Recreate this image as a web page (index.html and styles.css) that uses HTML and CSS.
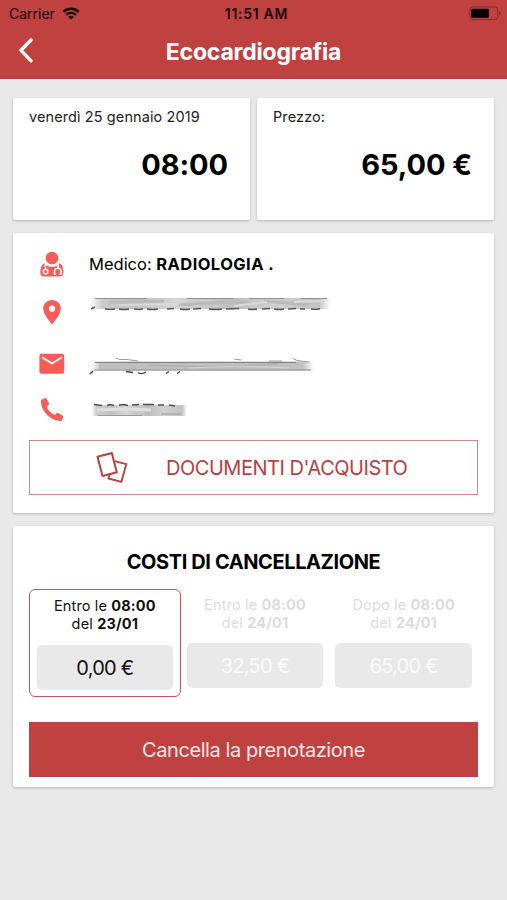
FILE: index.html
```html
<!DOCTYPE html>
<html lang="it">
<head>
  <meta charset="utf-8">
  <title>Ecocardiografia</title>
  <link rel="stylesheet" href="styles.css">
</head>
<body>
  <header class="header">
    <div class="status-bar">
      <div class="carrier">
        <span>Carrier</span>
        <svg class="wifi" width="18" height="14" viewBox="0 0 18 14">
          <path d="M1.400 4.800C5.600 .8 12.400 .8 16.600 4.800" fill="none" stroke="#180505" stroke-width="2.500"/>
          <path d="M4.200 7.800C7 5.200 11 5.200 13.800 7.800" fill="none" stroke="#180505" stroke-width="2.300"/>
          <path d="M9 12.500L6.200 9.900C7.800 8.500 10.200 8.500 11.800 9.900Z" fill="#180505"/>
        </svg>
      </div>
      <span class="clock">11:51 AM</span>
      <svg class="battery" width="32" height="15" viewBox="0 0 32 15">
        <rect x="0.800" y="1" width="28" height="12.500" rx="3" fill="none" stroke="#8a2c2b" stroke-width="1"/>
        <rect x="2.300" y="2.700" width="17.500" height="9" rx="1" fill="#000"/>
        <path d="M30.300 5.200v4.200q1.300-.6 1.300-2.100t-1.300-2.100z" fill="#6f2020"/>
      </svg>
    </div>
    <div class="title-bar">
      <svg class="back" width="16" height="26" viewBox="0 0 16 26">
        <path d="M13 2L3 12.300L13 22.800" fill="none" stroke="#fff" stroke-width="3.400" stroke-linecap="round" stroke-linejoin="round"/>
      </svg>
      <h1>Ecocardiografia</h1>
    </div>
  </header>

  <main class="content">
    <div class="summary">
      <section class="card summary-card">
        <p class="summary-label">venerdì 25 gennaio 2019</p>
        <p class="summary-value">08:00</p>
      </section>
      <section class="card summary-card">
        <p class="summary-label">Prezzo:</p>
        <p class="summary-value">65,00 €</p>
      </section>
    </div>

    <section class="card details">
      <div class="row">
        <svg class="icon" width="26" height="28" viewBox="0 0 26 28">
          <circle cx="13" cy="8" r="6.300" fill="#fb5c58"/>
          <path d="M5.500 13.200C7 15.800 10 16.800 13 16.800s6-1 7.500-3.600C23.500 14.500 24.400 18 24.400 22.500C24.400 25.300 23.200 26.500 21 26.500H5C2.500 26.500 1.400 25.300 1.400 22.500C1.400 18 2.500 14.500 5.500 13.200Z" fill="#fb5c58"/>
          <path d="M6.400 13.800V19M19 13.800C19.300 15.500 19.300 16.500 19 18M15.500 24.500V21.500C15.500 19.200 16.800 18.200 18.800 18.200S22 19.200 22 21.500V24.500M15.200 24.200h1.800M20.500 24.200h1.800" fill="none" stroke="#fff" stroke-width="1.500"/>
          <circle cx="6.600" cy="21.600" r="2.300" fill="#fb5c58" stroke="#fff" stroke-width="1.500"/>
        </svg>
        <p class="doctor">Medico: <b>RADIOLOGIA .</b></p>
      </div>
      <div class="row">
        <svg class="icon" width="26" height="28" viewBox="0 0 26 28">
          <path fill-rule="evenodd" d="M13 2C8 2 4.200 5.800 4.200 10.600C4.200 17 13 26.500 13 26.500S21.800 17 21.800 10.600C21.800 5.800 18 2 13 2ZM13 7.600a3.100 3.100 0 1 1 0 6.200a3.100 3.100 0 0 1 0-6.200Z" fill="#fb5c58"/>
        </svg>
        <!-- indirizzo oscurato -->
        <svg class="smear" width="250" height="48" viewBox="0 0 250 48">
          <defs>
            <linearGradient id="fade" x1="0" x2="1" y1="0" y2="0">
              <stop offset="0" stop-color="#bbb" stop-opacity="0"/>
              <stop offset=".05" stop-color="#cacaca"/>
              <stop offset=".2" stop-color="#c2c2c2"/>
              <stop offset=".35" stop-color="#d5d5d5"/>
              <stop offset=".6" stop-color="#bebebe"/>
              <stop offset=".75" stop-color="#d0d0d0"/>
              <stop offset=".95" stop-color="#c2c2c2"/>
              <stop offset="1" stop-color="#ccc" stop-opacity="0"/>
            </linearGradient>
            <filter id="soft" x="-5%" y="-50%" width="110%" height="200%">
              <feGaussianBlur stdDeviation=".6"/>
            </filter>
          </defs>
          <g filter="url(#soft)" fill="none">
            <rect x="2" y="10" width="240" height="11" fill="url(#fade)"/>
            <path d="M6 10.500H58M98 10.500H145M160 10.500H195M212 10.500H238" stroke="#909090" stroke-width="1.100"/>
            <path d="M20 14L75 13M90 17L135 14L160 15M175 13L220 17" stroke="#bababa" stroke-width="3"/>
            <path d="M30 17L88 16M145 18L178 14M205 14L236 13" stroke="#dadada" stroke-width="2"/>
            <path d="M2 21L6 19M16 21q5 .8 10 0M30 21q5 1 10 0M45 21q5 .8 9 0M58 21q6 1 11 0M78 21L85 20.500M91 21q6 1 10 0M104 21L112 20.500M120 21q7 1 13 0M137 21L150 20.500M159 21q5 1 9 0M173 21L181 20.500M185 21q6 1 10 0M199 21L207 20.500M211 21H216M222 21q5 1 9-.5" stroke="#555" stroke-width="1.400"/>
          </g>
        </svg>
      </div>
      <div class="row mail-row">
        <svg class="icon" width="26" height="28" viewBox="0 0 26 28">
          <rect x=".4" y="3.700" width="24.800" height="20" rx="2" fill="#fb5c58"/>
          <path d="M3 7.200L13 13.500L23 7.200" fill="none" stroke="#fff" stroke-width="1.900"/>
        </svg>
        <!-- email oscurata -->
        <svg class="smear" width="250" height="56" viewBox="0 0 250 56">
          <g filter="url(#soft)" fill="none">
            <rect x="2" y="25.500" width="223" height="9" fill="url(#fade)"/>
            <rect x="10" y="26.500" width="200" height="7" fill="#bfbfbf"/>
            <path d="M6 26.500H207" stroke="#808080" stroke-width="1.200"/>
            <path d="M5 34H222" stroke="#8c8c8c" stroke-width="1.200"/>
            <path d="M60 29L120 31L190 28" stroke="#aaa" stroke-width="1"/>
            <path d="M100 32L150 30L200 32" stroke="#d5d5d5" stroke-width="1"/>
            <path d="M27 22.500L32 23.500L38 23.500L49 25M145 23L152 24M180 25L193 25M204 22.500L208 24.500L220 26" stroke="#999" stroke-width="1"/>
            <path d="M1 38L4 35M37 35.500L44 36.500M49 36.500Q53 39 57 36M77 37.500L80 35.500M88 37.500L91 35.500" stroke="#444" stroke-width="1.400"/>
          </g>
        </svg>
      </div>
      <div class="row phone-row">
        <svg class="icon" width="26" height="28" viewBox="0 0 26 28">
          <path d="M3 3.500L6 2.100Q7 1.800 7.500 2.700L9.900 7.100Q10.300 8 9.600 8.700L7.700 10.600C8.800 14.300 12 17.400 15.700 19L17.400 17.200Q18.200 16.400 19.200 16.900L23.400 19.500Q24.400 20.100 24.100 21.100L23.200 24.100Q22.900 25.100 21.800 25.100C11.500 24.800 2.200 15.500 1.900 5.100Q1.900 4.100 3 3.500Z" fill="#fb5c58"/>
        </svg>
        <!-- telefono oscurato -->
        <svg class="smear" width="250" height="36" viewBox="0 0 250 36">
          <g filter="url(#soft)" fill="none">
            <rect x="3" y="13" width="95" height="11" fill="url(#fade)"/>
            <path d="M5 12.500L13 13.500M18 13.500L21 12.500L25 13.500M30 13L35 12.500L39 13.500M43 13L50 12.500M54 12.500H65M69 13H75M80 13L86 14" stroke="#505050" stroke-width="1.400"/>
            <path d="M8 18L35 17L62 18" stroke="#e0e0e0" stroke-width="3"/>
            <path d="M9 23.500H53M72 22H92" stroke="#9a9a9a" stroke-width="1.200"/>
          </g>
        </svg>
      </div>
      <button class="documents" type="button">
        <svg width="32" height="32" viewBox="0 0 32 32">
          <path d="M18.600 9.200L30.300 12.200L25.300 29.800L12.500 26.500L13.500 23" fill="none" stroke="#b94040" stroke-width="1.900"/>
          <path d="M1.500 4.700L15.800 1L20.800 20.300L6.500 24Z" fill="none" stroke="#b94040" stroke-width="2" stroke-linejoin="round"/>
        </svg>
        <span>DOCUMENTI D'ACQUISTO</span>
      </button>
    </section>

    <section class="card cancellation">
      <h2>COSTI DI CANCELLAZIONE</h2>
      <div class="costs">
        <div class="cost active">
          <p>Entro le <b>08:00</b><br>del <b>23/01</b></p>
          <div class="amount">0,00 €</div>
        </div>
        <div class="cost">
          <p>Entro le <b>08:00</b><br>del <b>24/01</b></p>
          <div class="amount">32,50 €</div>
        </div>
        <div class="cost">
          <p>Dopo le <b>08:00</b><br>del <b>24/01</b></p>
          <div class="amount">65,00 €</div>
        </div>
      </div>
      <button class="cancel" type="button">Cancella la prenotazione</button>
    </section>
  </main>
</body>
</html>
```
FILE: styles.css
```css
* {
  box-sizing: border-box;
}

body {
  margin: 0;
  min-height: 900px;
  background-color: #e9e9e9;
  color: #000;
  font-family: Inter, "Liberation Sans", sans-serif;
}

h1, h2, p {
  margin: 0;
}

svg {
  display: block;
  flex: none;
}

button {
  font-family: inherit;
  padding: 0;
}

.header {
  height: 79px;
  background-color: #bf4140;
  border-bottom: 1px solid #b23b3a;
}

.status-bar {
  display: grid;
  grid-template-columns: 1fr auto 1fr;
  align-items: center;
  height: 27px;
  padding: 0 6px 0 9px;
  font-size: 14px;
  line-height: 27px;
  color: #180505;
}

.carrier {
  display: flex;
  align-items: center;
  gap: 7px;
}

.clock {
  padding-left: 3px;
  font-size: 14px;
  font-weight: 600;
  letter-spacing: 0.7px;
}

.battery {
  justify-self: end;
}

.title-bar {
  display: grid;
  grid-template-columns: 40px 1fr 40px;
  align-items: center;
  height: 48px;
}

.back {
  margin-left: 18px;
}

h1 {
  padding-top: 2px;
  text-align: center;
  color: #fff;
  font-size: 23px;
  line-height: 28px;
  font-weight: 700;
  letter-spacing: -0.18px;
}

.content {
  display: flex;
  flex-direction: column;
  gap: 13px;
  padding: 19px 13px 0;
}

.card {
  background-color: #fff;
  border-radius: 2px;
  box-shadow: 0 1px 3px rgba(0, 0, 0, 0.22);
}

.summary {
  display: flex;
  gap: 7px;
}

.summary-card {
  flex: 1;
  height: 122px;
  padding: 9px 16px 0;
}

.summary-label {
  font-size: 14.5px;
  line-height: 20px;
  letter-spacing: 0.1px;
  color: #222;
}

.summary-value {
  padding: 20px 6px 0 0;
  text-align: right;
  font-size: 29px;
  line-height: 36px;
  font-weight: 700;
  letter-spacing: -0.1px;
}

.details {
  height: 280px;
  padding: 7px 16px 0;
}

.row {
  display: flex;
  align-items: center;
  gap: 24px;
  height: 48px;
  padding-left: 10px;
}

.mail-row {
  height: 56px;
}

.phone-row {
  height: 36px;
}

.doctor {
  font-size: 16.5px;
}

.doctor b {
  letter-spacing: 0.42px;
}

b {
  font-weight: 700;
}

.documents {
  display: flex;
  align-items: center;
  gap: 38px;
  width: 100%;
  height: 55px;
  margin-top: 12px;
  padding-left: 66px;
  background-color: #fff;
  border: 1px solid #d58584;
  color: #b94040;
  font-size: 20px;
  letter-spacing: -0.47px;
}

.cancellation {
  height: 261px;
  padding: 22px 16px 0;
}

h2 {
  text-align: center;
  font-size: 20px;
  line-height: 28px;
  font-weight: 700;
  letter-spacing: -0.4px;
}

.costs {
  display: flex;
  align-items: flex-start;
  height: 108px;
  margin-top: 13px;
}

.cost {
  width: 149px;
  padding: 7px 6px 0;
  text-align: center;
  color: #dcdcdc;
}

.cost p {
  font-size: 14.5px;
  line-height: 18px;
  letter-spacing: 0.15px;
}

.amount {
  height: 45px;
  margin-top: 11px;
  background-color: #e9e9e9;
  border-radius: 5px;
  color: #fafafa;
  font-size: 20px;
  line-height: 46px;
  letter-spacing: -0.75px;
}

.cost.active {
  width: 152px;
  height: 108px;
  padding: 7px 7px 0;
  border: 1px solid #c95554;
  border-radius: 6px;
  color: #111;
}

.active .amount {
  margin-top: 12px;
  color: #111;
}

.cancel {
  display: block;
  width: 100%;
  height: 55px;
  margin-top: 25px;
  background-color: #bf4140;
  border: 0;
  color: #ffe9e7;
  font-size: 20px;
  letter-spacing: -0.43px;
}
```
